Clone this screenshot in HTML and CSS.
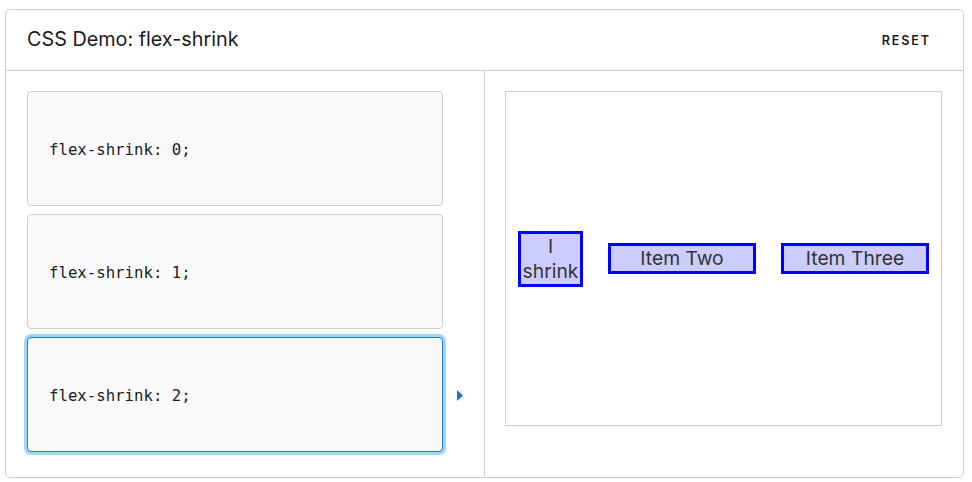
FILE: index.html
```html
<!DOCTYPE html>
<html>
<head>
<meta charset="utf-8">
<link rel="stylesheet" href="styles.css">
</head>
<body>
<section class="demo">
  <header class="demo-header">
    <h1 class="demo-title">CSS Demo: flex-shrink</h1>
    <button class="reset">RESET</button>
  </header>
  <div class="demo-body">
    <div class="choices">
      <div class="choice-row">
        <div class="choice"><code>flex-shrink: 0;</code></div>
        <span class="marker"></span>
      </div>
      <div class="choice-row">
        <div class="choice"><code>flex-shrink: 1;</code></div>
        <span class="marker"></span>
      </div>
      <div class="choice-row">
        <div class="choice selected"><code>flex-shrink: 2;</code></div>
        <span class="marker"><svg width="6" height="11" viewBox="0 0 6 11"><path d="M0 0 L6 5.5 L0 11 Z" fill="#1a74d6"/></svg></span>
      </div>
    </div>
    <div class="output-col">
      <div class="output">
        <div class="item item-one">I shrink</div>
        <div class="item item-wide">Item Two</div>
        <div class="item item-wide">Item Three</div>
      </div>
    </div>
  </div>
</section>
</body>
</html>
```
FILE: styles.css
```css
* { box-sizing: border-box; }
html, body { margin: 0; background: #fff; }
body {
  padding: 9px 9px 0 5px;
  font-family: Inter, "Noto Sans", sans-serif;
  color: #1b1b1b;
}
.demo {
  width: 959px;
  height: 469px;
  border: 1px solid #cdcdcd;
  border-radius: 5px;
  display: flex;
  flex-direction: column;
}
.demo-header {
  height: 61px;
  border-bottom: 1px solid #cdcdcd;
  display: flex;
  align-items: center;
  justify-content: space-between;
  padding: 0 32px 0 21px;
}
.demo-title {
  margin: 0;
  font-size: 19.8px;
  font-weight: 400;
  color: #1b1b1b;
  position: relative;
  top: -1px;
}
.reset {
  border: none;
  background: none;
  padding: 0;
  font-family: Inter, "Noto Sans", sans-serif;
  font-size: 12.5px;
  font-weight: 600;
  letter-spacing: 1.9px;
  color: #1b1b1b;
}
.demo-body {
  flex: 1;
  display: flex;
}
.choices {
  width: 479px;
  border-right: 1px solid #cdcdcd;
  padding: 20px 0 0 21px;
  display: flex;
  flex-direction: column;
  gap: 8px;
}
.choice-row {
  display: flex;
  align-items: center;
}
.choice {
  width: 416px;
  height: 115px;
  background: #f9f9fb;
  border: 1px solid #cdcdcd;
  border-radius: 4px;
  display: flex;
  align-items: center;
  padding-left: 21px;
}
.choice.selected {
  border-color: #1a7ddb;
  box-shadow: 0 0 0 3px #a6d5fa;
}
.choice code {
  font-family: "DejaVu Sans Mono", monospace;
  font-size: 15.7px;
  color: #1b1b1b;
  position: relative;
  top: 1px;
}
.marker {
  display: flex;
  padding-left: 14px;
  padding-top: 2px;
}
.output-col {
  flex: 1;
  padding: 20px 20px 0 20px;
}
.output {
  width: 437px;
  height: 335px;
  border: 1px solid #cdcdcd;
  display: flex;
  align-items: center;
  gap: 25px;
  padding-left: 12px;
}
.item {
  background: #ccf;
  border: 3px solid #0000ff;
  font-size: 19.3px;
  line-height: 25px;
  color: #333;
  text-align: center;
}
.item-one {
  width: 65px;
}
.item-wide {
  width: 148px;
}
```
